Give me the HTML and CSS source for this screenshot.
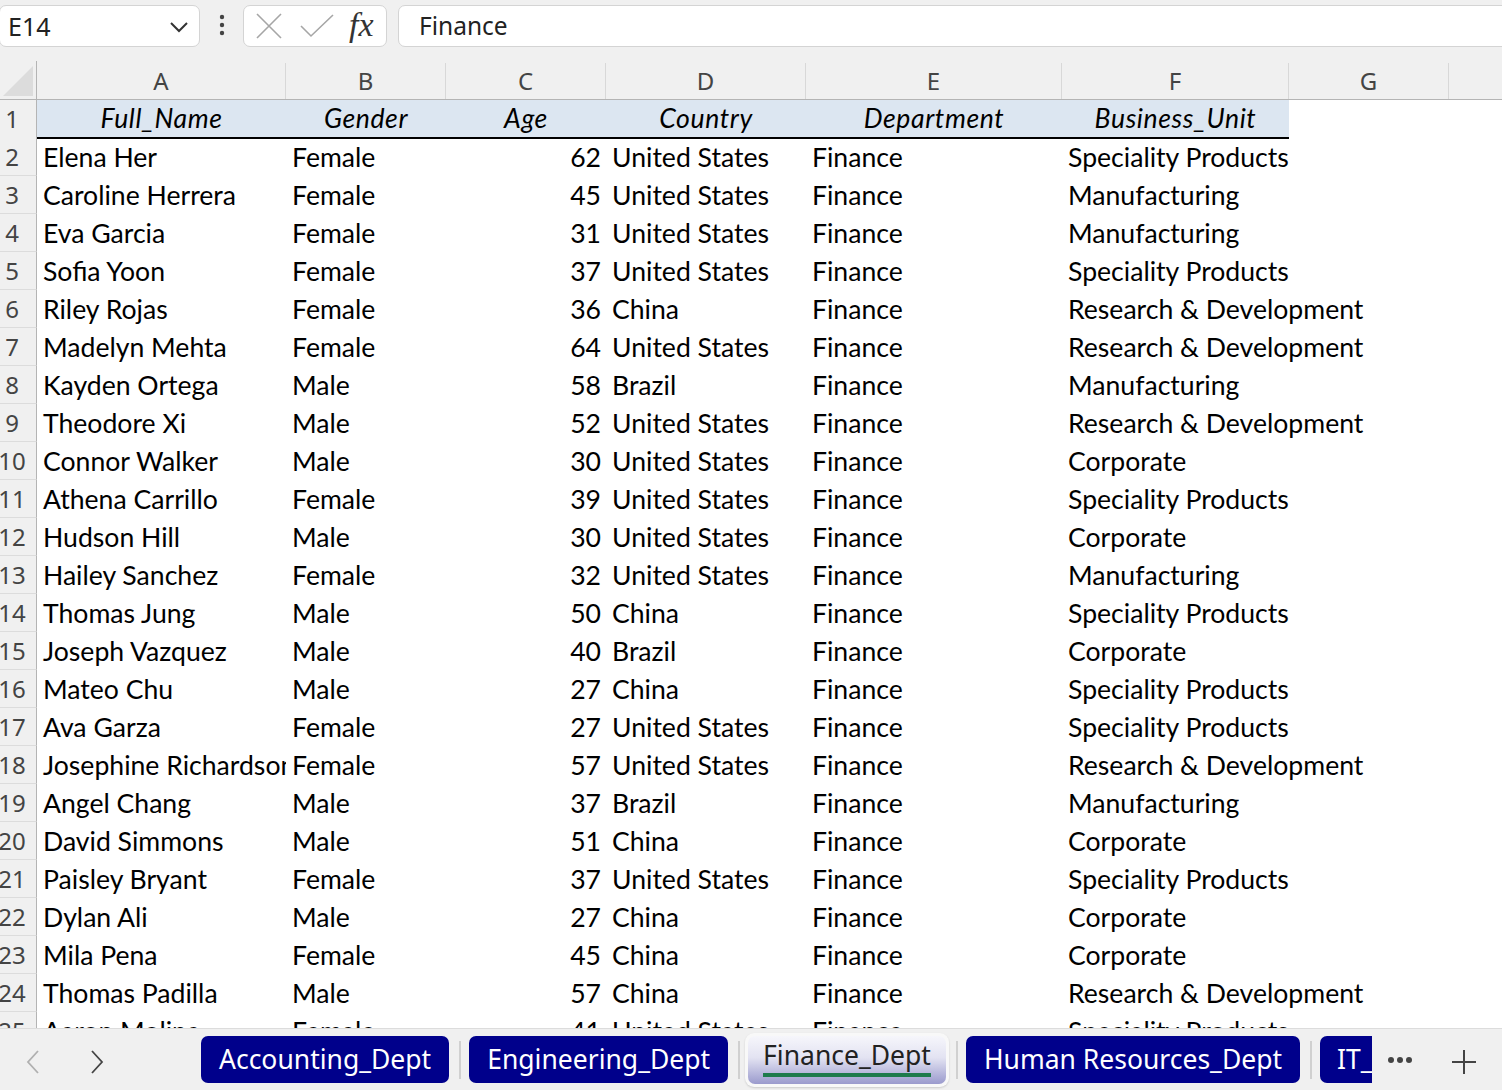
FILE: index.html
```html
<!DOCTYPE html>
<html>
<head>
<meta charset="utf-8">
<link rel="stylesheet" href="styles.css">
</head>
<body>
<div class="app">
  <div class="fbar">
    <div class="namebox">
      <span class="nb-text">E14</span>
      <svg class="chev" width="20" height="12" viewBox="0 0 20 12"><polyline points="2,2 10,10 18,2" fill="none" stroke="#333" stroke-width="2"/></svg>
    </div>
    <svg class="vdots" width="8" height="26" viewBox="0 0 8 26"><circle cx="4" cy="4" r="2.2" fill="#444"/><circle cx="4" cy="12" r="2.2" fill="#444"/><circle cx="4" cy="20" r="2.2" fill="#444"/></svg>
    <div class="fbtns">
      <svg width="28" height="28" viewBox="0 0 28 28"><path d="M2 2 L26 26 M26 2 L2 26" stroke="#a6a6a6" stroke-width="1.6" fill="none"/></svg>
      <svg width="36" height="26" viewBox="0 0 36 26"><path d="M2 13 L12 23 L34 2" stroke="#a6a6a6" stroke-width="1.6" fill="none"/></svg>
      <span class="fx">fx</span>
    </div>
    <div class="finput">Finance</div>
  </div>

  <div class="sheet">
    <div class="colhead">
      <div class="corner"><svg width="30" height="30" viewBox="0 0 30 30"><polygon points="30,0 30,30 0,30" fill="#dcdcdc"/></svg></div>
      <div class="ch">A</div><div class="ch">B</div><div class="ch">C</div><div class="ch">D</div><div class="ch">E</div><div class="ch">F</div><div class="ch">G</div><div class="ch last"></div>
    </div>
    <div class="rows" id="rows">
      <div class="row hdr">
        <div class="rh"><span>1</span></div>
        <div class="c h">Full_Name</div><div class="c h">Gender</div><div class="c h">Age</div><div class="c h">Country</div><div class="c h">Department</div><div class="c h">Business_Unit</div><div class="c"></div><div class="c"></div>
      </div>
    </div>
  </div>

  <div class="tabbar">
    <div class="nav prev">
      <svg width="14" height="26" viewBox="0 0 14 26"><polyline points="12,2 2,13 12,24" fill="none" stroke="#b0b0b0" stroke-width="1.8"/></svg>
    </div>
    <div class="nav next">
      <svg width="14" height="26" viewBox="0 0 14 26"><polyline points="2,2 12,13 2,24" fill="none" stroke="#444" stroke-width="1.8"/></svg>
    </div>
    <div class="tabs">
      <div class="tab">Accounting_Dept</div>
      <div class="sep"></div>
      <div class="tab">Engineering_Dept</div>
      <div class="sep"></div>
      <div class="tab-active-wrap"><div class="tab active"><span class="tlabel">Finance_Dept</span></div></div>
      <div class="sep"></div>
      <div class="tab">Human Resources_Dept</div>
      <div class="sep"></div>
      <div class="tab cut">IT_</div>
    </div>
    <div class="more">
      <svg width="26" height="8" viewBox="0 0 26 8"><circle cx="4" cy="4" r="3" fill="#444"/><circle cx="13" cy="4" r="3" fill="#444"/><circle cx="22" cy="4" r="3" fill="#444"/></svg>
    </div>
    <div class="plus">
      <svg width="26" height="26" viewBox="0 0 26 26"><path d="M13 1 V25 M1 13 H25" stroke="#444" stroke-width="2" fill="none"/></svg>
    </div>
  </div>
</div>
<script src="app.js"></script>
</body>
</html>
```

FILE: app.js
```js
var data = [
["Elena Her","Female",62,"United States","Finance","Speciality Products"],
["Caroline Herrera","Female",45,"United States","Finance","Manufacturing"],
["Eva Garcia","Female",31,"United States","Finance","Manufacturing"],
["Sofia Yoon","Female",37,"United States","Finance","Speciality Products"],
["Riley Rojas","Female",36,"China","Finance","Research & Development"],
["Madelyn Mehta","Female",64,"United States","Finance","Research & Development"],
["Kayden Ortega","Male",58,"Brazil","Finance","Manufacturing"],
["Theodore Xi","Male",52,"United States","Finance","Research & Development"],
["Connor Walker","Male",30,"United States","Finance","Corporate"],
["Athena Carrillo","Female",39,"United States","Finance","Speciality Products"],
["Hudson Hill","Male",30,"United States","Finance","Corporate"],
["Hailey Sanchez","Female",32,"United States","Finance","Manufacturing"],
["Thomas Jung","Male",50,"China","Finance","Speciality Products"],
["Joseph Vazquez","Male",40,"Brazil","Finance","Corporate"],
["Mateo Chu","Male",27,"China","Finance","Speciality Products"],
["Ava Garza","Female",27,"United States","Finance","Speciality Products"],
["Josephine Richardson","Female",57,"United States","Finance","Research & Development"],
["Angel Chang","Male",37,"Brazil","Finance","Manufacturing"],
["David Simmons","Male",51,"China","Finance","Corporate"],
["Paisley Bryant","Female",37,"United States","Finance","Speciality Products"],
["Dylan Ali","Male",27,"China","Finance","Corporate"],
["Mila Pena","Female",45,"China","Finance","Corporate"],
["Thomas Padilla","Male",57,"China","Finance","Research & Development"],
["Aaron Molina","Female",41,"United States","Finance","Speciality Products"]
];
var rows = document.getElementById("rows");
data.forEach(function (r, i) {
  var row = document.createElement("div");
  row.className = "row";
  var html = '<div class="rh"><span>' + (i + 2) + '</span></div>';
  html += '<div class="c clip">' + r[0] + '</div>';
  html += '<div class="c clip">' + r[1] + '</div>';
  html += '<div class="c num">' + r[2] + '</div>';
  html += '<div class="c clip">' + r[3] + '</div>';
  html += '<div class="c clip">' + r[4] + '</div>';
  html += '<div class="c">' + r[5].replace("&", "&amp;") + '</div>';
  html += '<div class="c"></div><div class="c"></div>';
  row.innerHTML = html;
  rows.appendChild(row);
});
```

FILE: styles.css
```css
html, body {
  margin: 0;
  padding: 0;
}
body {
  width: 1502px;
  height: 1090px;
  overflow: hidden;
  background: #ffffff;
}
.app {
  display: flex;
  flex-direction: column;
  height: 1090px;
  --cols: 37px 249px 160px 160px 200px 256px 227px 160px 1fr;
}

/* formula bar */
.fbar {
  height: 52px;
  box-sizing: border-box;
  padding-top: 5px;
  background: #f0f0f0;
  display: flex;
  align-items: flex-start;
  font-family: "Noto Sans", "Open Sans", sans-serif;
}
.namebox {
  width: 201px;
  height: 42px;
  box-sizing: border-box;
  margin-left: -1px;
  background: #fff;
  border: 1px solid #d4d4d4;
  border-radius: 7px;
  display: flex;
  align-items: center;
  justify-content: space-between;
  padding: 0 10px 0 8px;
}
.nb-text {
  font-size: 25px;
  color: #222;
}
.chev { margin-top: 2px; }
.vdots {
  margin: 8px 0 0 18px;
}
.fbtns {
  margin-left: 17px;
  width: 144px;
  height: 42px;
  box-sizing: border-box;
  background: #fff;
  border: 1px solid #d4d4d4;
  border-radius: 7px;
  display: flex;
  align-items: center;
  padding-left: 11px;
  gap: 16px;
}
.fx {
  font-family: "Liberation Serif", "DejaVu Serif", serif;
  font-style: italic;
  font-size: 34px;
  color: #333;
  margin-left: -2px;
  line-height: 1;
  margin-top: -2px;
}
.finput {
  margin-left: 11px;
  flex: 1;
  margin-right: -10px;
  height: 42px;
  box-sizing: border-box;
  background: #fff;
  border: 1px solid #d4d4d4;
  border-radius: 7px;
  padding-left: 20px;
  font-size: 24.5px;
  line-height: 40px;
  color: #222;
}

/* sheet */
.sheet {
  flex: 1;
  overflow: hidden;
  display: flex;
  flex-direction: column;
}
.colhead {
  display: grid;
  grid-template-columns: var(--cols);
  height: 48px;
  box-sizing: border-box;
  background: #f0f0f0;
  border-bottom: 1px solid #b4b4b4;
  font-family: "Noto Sans", "Open Sans", sans-serif;
  font-size: 24px;
  color: #444;
}
.corner {
  display: flex;
  align-items: flex-end;
  justify-content: flex-end;
  padding: 0 3px 3px 0;
  border-right: 1px solid #b4b4b4;
  margin-top: 9px;
}
.ch {
  margin-top: 11px;
  border-right: 1px solid #d8d8d8;
  text-align: center;
  line-height: 36px;
}
.ch.last { border-right: none; }

.rows {
  font-family: "Lato", "Liberation Sans", sans-serif;
  font-size: 26.6px;
  color: #000;
}
.row {
  display: grid;
  grid-template-columns: var(--cols);
  height: 38px;
}
.rh {
  background: #f0f0f0;
  border-right: 1px solid #b4b4b4;
  border-bottom: 1px solid #dcdcdc;
  box-sizing: border-box;
  font-family: "Noto Sans", "Open Sans", sans-serif;
  font-size: 24px;
  color: #444;
  line-height: 37px;
}
.rh span {
  width: 24px;
  white-space: nowrap;
  display: flex;
  justify-content: center;
}
.c {
  white-space: nowrap;
  padding: 0 6px;
  line-height: 38px;
  min-width: 0;
}
.c.clip { overflow: hidden; text-overflow: clip; padding-right: 0; }
.c.num { text-align: right; padding-right: 5px; }
.row.hdr .c.h {
  background: #dce6f1;
  border-bottom: 2px solid #000;
  font-style: italic;
  text-align: center;
  line-height: 37px;
  box-sizing: border-box;
  letter-spacing: 0.6px;
}

/* tab bar */
.tabbar {
  height: 62px;
  flex: none;
  box-sizing: border-box;
  background: #f0f0f0;
  border-top: 1px solid #dcdcdc;
  display: flex;
  align-items: center;
  font-family: "Noto Sans", "Open Sans", sans-serif;
  font-size: 26.5px;
}
.nav {
  width: 14px;
  height: 26px;
}
.prev { margin-left: 26px; }
.next { margin-left: 50px; }
.tabs {
  display: flex;
  align-items: center;
  margin-left: 97px;
  width: 1173px;
  overflow: hidden;
  height: 62px;
}
.tab {
  flex: none;
  background: #00008b;
  color: #fff;
  height: 47px;
  box-sizing: border-box;
  border-radius: 7px;
  padding: 0 18px;
  line-height: 46px;
  white-space: nowrap;
}
.tab.cut {
  border-radius: 7px 0 0 7px;
  width: 52px;
  padding: 0 0 0 17px;
  overflow: hidden;
}
.sep {
  flex: none;
  width: 2px;
  height: 38px;
  background: #d0d0d0;
  margin: 0 8px 0 10px;
}
.tab-active-wrap {
  flex: none;
  padding: 3px;
  background: #f8f8f8;
  border-radius: 9px;
  box-shadow: 0 1px 2px rgba(0,0,0,0.15);
  margin: 0 -3px;
}
.tab.active {
  background: linear-gradient(#f6f6fb, #e3e3f2 45%, #9a9acd);
  color: #222;
  padding: 0 15px;
  line-height: 38px;
  height: 48px;
}
.tlabel {
  display: inline-block;
  border-bottom: 4px solid #1e7b4c;
  line-height: 36px;
}
.more {
  margin-left: 13px;
  width: 26px;
  height: 8px;
  display: flex;
}
.plus {
  margin-left: 38px;
  width: 26px;
  height: 26px;
}
```
